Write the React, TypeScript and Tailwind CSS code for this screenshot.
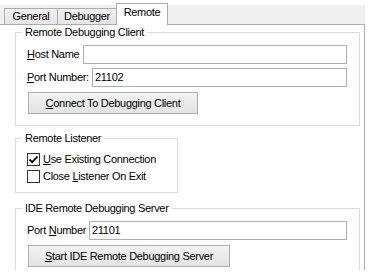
import React from 'react';

const Btn: React.FC<{ w: string; children: React.ReactNode }> = ({ w, children }) => (
  <button
    className={`${w} ml-[1px] h-[22px] border border-[#adadad] bg-gradient-to-b from-[#f2f2f2] to-[#e3e3e3] text-black leading-[20px]`}
  >
    {children}
  </button>
);

const Field: React.FC<{ value?: string }> = ({ value }) => (
  <div className="flex-1 h-[19px] border border-[#abadb3] bg-white pl-[2px] leading-[17px]">{value}</div>
);

const Check: React.FC<{ checked?: boolean; children: React.ReactNode }> = ({ checked, children }) => (
  <div className="flex items-center h-[17px] gap-[3px]">
    <div className="w-[13px] h-[13px] border border-[#333333] bg-white flex items-center justify-center">
      {checked && (
        <svg width="11" height="11" viewBox="0 0 11 11">
          <path d="M1.5 5.5 L4.2 8.2 L9.5 2.5" fill="none" stroke="#000" strokeWidth="1.8" />
        </svg>
      )}
    </div>
    <span>{children}</span>
  </div>
);

export default function App() {
  return (
    <div
      className="w-[379px] h-[278px] bg-white text-black text-[11px] leading-[13px] tracking-[-0.3px] overflow-hidden"
      style={{ fontFamily: '"Liberation Sans", Arial, sans-serif' }}
    >
      <div className="h-[5px]" />
      {/* tab strip */}
      <div className="relative z-10 flex items-end h-[19px] w-[365px] bg-[#f0f0f0] pl-[4px]">
        <div className="w-[54px] h-[16px] border border-b-0 border-[#acacac] bg-gradient-to-b from-[#f0f0f0] to-[#e5e5e5] text-center leading-[15px]">
          General
        </div>
        <div className="w-[59px] h-[16px] border border-l-0 border-b-0 border-[#acacac] bg-gradient-to-b from-[#f0f0f0] to-[#e5e5e5] text-center leading-[15px]">
          Debugger
        </div>
        <div className="w-[52px] h-[22px] -mb-[1px] -ml-[1px] border border-b-0 border-[#acacac] bg-white text-center leading-[17px]">
          Remote
        </div>
      </div>
      {/* tab panel */}
      <div className="w-[365px] h-[246px] border-t border-r border-[#acacac] bg-white pl-[15px] overflow-hidden">
        <fieldset className="w-[345px] border border-[#dcdcdc] mt-[1px] pl-[11px] pr-[12px] pb-[11px]">
          <legend className="-ml-[5px] px-[3px]">Remote Debugging Client</legend>
          <div className="flex items-center mt-[6px]">
            <span className="w-[56px]">
              <u>H</u>ost Name
            </span>
            <Field />
          </div>
          <div className="flex items-center mt-[4px]">
            <span className="w-[65px]">
              <u>P</u>ort Number:
            </span>
            <Field value="21102" />
          </div>
          <div className="mt-[5px]">
            <Btn w="w-[170px]">
              <u>C</u>onnect To Debugging Client
            </Btn>
          </div>
        </fieldset>

        <fieldset className="w-[163px] border border-[#dcdcdc] mt-[6px] pl-[11px] pb-[7px]">
          <legend className="-ml-[5px] px-[3px]">Remote Listener</legend>
          <div className="mt-[6px]">
            <Check checked>
              <u>U</u>se Existing Connection
            </Check>
            <Check>
              Close <u>L</u>istener On Exit
            </Check>
          </div>
        </fieldset>

        <fieldset className="w-[345px] h-[90px] border border-[#dcdcdc] mt-[9px] pl-[11px] pr-[12px]">
          <legend className="-ml-[5px] px-[3px]">IDE Remote Debugging Server</legend>
          <div className="flex items-center mt-[6px]">
            <span className="w-[62px]">
              Port <u>N</u>umber
            </span>
            <Field value="21101" />
          </div>
          <div className="mt-[5px]">
            <Btn w="w-[202px]">
              <u>S</u>tart IDE Remote Debugging Server
            </Btn>
          </div>
        </fieldset>
      </div>
    </div>
  );
}
